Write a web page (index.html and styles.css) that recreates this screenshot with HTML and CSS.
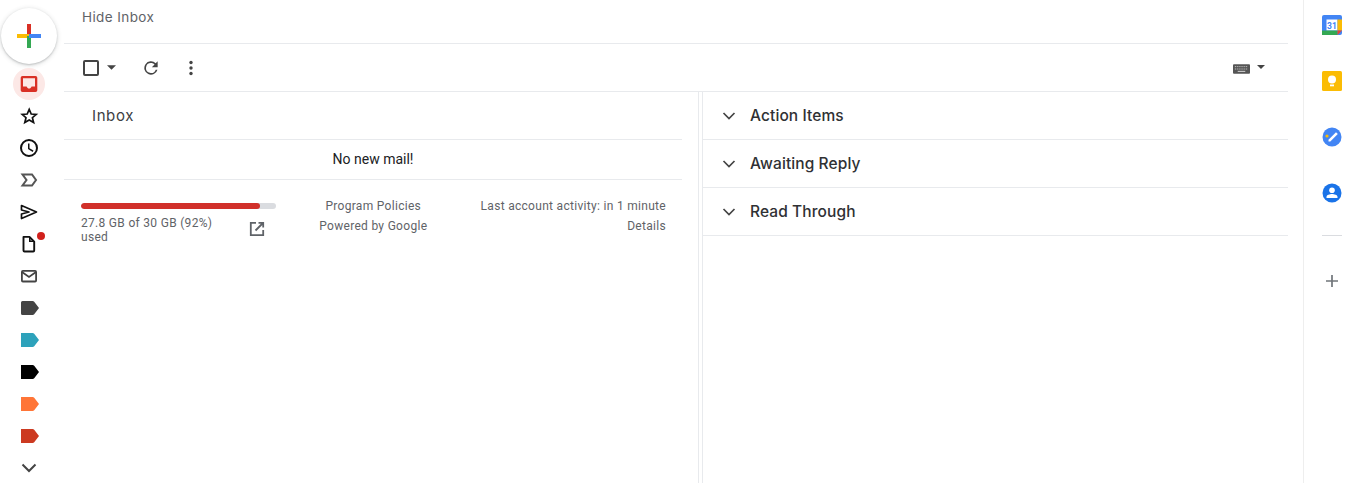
FILE: index.html
```html
<!DOCTYPE html>
<html lang="en">
<head>
<meta charset="utf-8">
<title>Inbox</title>
<link rel="stylesheet" href="styles.css">
</head>
<body>
<div class="app">
  <nav class="rail">
    <button class="compose" aria-label="Compose">
      <svg width="24" height="24" viewBox="0 0 24 24"><rect x="10" y="0" width="4" height="12" fill="#d93025"/><rect x="0" y="10" width="12" height="4" fill="#fbbc04"/><rect x="10" y="12" width="4" height="12" fill="#34a853"/><rect x="12" y="10" width="12" height="4" fill="#4285f4"/></svg>
    </button>
    <ul class="rail-list">
      <li class="rail-item"><span class="active-dot"><svg class="ic" viewBox="0 0 24 24"><path fill="#d93025" fill-rule="evenodd" d="M5.500 4h13A1.800 1.800 0 0 1 20.300 5.800v12.400a1.800 1.800 0 0 1-1.800 1.800h-13a1.800 1.800 0 0 1-1.800-1.800V5.800A1.800 1.800 0 0 1 5.500 4zM6 6.200v8.300h3.600c.5 1.300 1.400 2.100 2.500 2.100s2-.8 2.500-2.100H18V6.200z"/></svg></span></li>
      <li class="rail-item"><svg class="ic" viewBox="0 0 24 24"><path fill="none" stroke="#111" stroke-width="1.700" d="M12.200 5.300l2 4.700 5 .4-3.800 3.300 1.200 4.900-4.400-2.600-4.400 2.600 1.200-4.900L5.200 10.400l5-.4z"/></svg></li>
      <li class="rail-item"><svg class="ic" viewBox="0 0 24 24"><path fill="#111" d="M12 3a9 9 0 1 0 0 18 9 9 0 0 0 0-18zm0 16a7 7 0 1 1 0-14 7 7 0 0 1 0 14zm.5-11.500H11v5.500l4.700 2.900.8-1.300-4-2.400z"/></svg></li>
      <li class="rail-item"><svg class="ic" viewBox="0 0 24 24"><path fill="none" stroke="#555" stroke-width="2" d="M5.500 6.500H15l4 5.500-4 5.500H5.500l4-5.500z"/></svg></li>
      <li class="rail-item"><svg class="ic" viewBox="0 0 24 24"><path fill="none" stroke="#111" stroke-width="1.700" stroke-linejoin="round" d="M4.500 5.500L19.500 12 4.500 18.500V14L12 12 4.500 10z"/></svg></li>
      <li class="rail-item"><span class="draft"><svg class="ic" viewBox="0 0 24 24"><path fill="none" stroke="#111" stroke-width="1.900" stroke-linejoin="round" d="M6.500 4.900h6l4.700 4.700v8.900a1 1 0 0 1-1 1H7.500a1 1 0 0 1-1-1z"/><path fill="#111" d="M12 5h1.500v3.500H17v1.500h-5z"/></svg><i class="badge"></i></span></li>
      <li class="rail-item"><svg class="ic" viewBox="0 0 24 24"><rect x="4.900" y="6.900" width="14.200" height="10.600" rx="1" fill="none" stroke="#444" stroke-width="1.800"/><path fill="none" stroke="#444" stroke-width="1.800" d="M5 8l7 5 7-5"/></svg></li>
      <li class="rail-item"><svg class="ic lbl" viewBox="0 0 24 24"><path fill="#444" d="M16.200 5.800A2 2 0 0 0 14.600 5H4.500A1.500 1.500 0 0 0 3 6.500v11A1.500 1.500 0 0 0 4.500 19h10.100a2 2 0 0 0 1.600-.8L21 12z"/></svg></li>
      <li class="rail-item"><svg class="ic lbl" viewBox="0 0 24 24"><path fill="#2da2bb" d="M16.200 5.800A2 2 0 0 0 14.600 5H3v14h11.600a2 2 0 0 0 1.600-.8L21 12z"/></svg></li>
      <li class="rail-item"><svg class="ic lbl" viewBox="0 0 24 24"><path fill="#000" d="M16.200 5.800A2 2 0 0 0 14.600 5H3v14h11.600a2 2 0 0 0 1.600-.8L21 12z"/></svg></li>
      <li class="rail-item"><svg class="ic lbl" viewBox="0 0 24 24"><path fill="#ff7537" d="M16.200 5.800A2 2 0 0 0 14.600 5H3v14h11.600a2 2 0 0 0 1.600-.8L21 12z"/></svg></li>
      <li class="rail-item"><svg class="ic lbl" viewBox="0 0 24 24"><path fill="#cc3a21" d="M16.200 5.800A2 2 0 0 0 14.600 5H3v14h11.600a2 2 0 0 0 1.600-.8L21 12z"/></svg></li>
      <li class="rail-item"><svg class="ic" viewBox="0 0 24 24"><path fill="none" stroke="#444" stroke-width="2" d="M5.500 8.500l6.500 6.500 6.500-6.500"/></svg></li>
    </ul>
  </nav>

  <main class="main">
    <div class="topbar"><span class="hide-inbox">Hide Inbox</span></div>
    <div class="toolbar">
      <div class="tools">
        <svg class="tool-check" width="20" height="20" viewBox="0 0 20 20"><rect x="3" y="3" width="14" height="14" rx="1" fill="none" stroke="#444" stroke-width="2"/></svg>
        <svg class="tool-caret" width="9" height="5" viewBox="0 0 10 5"><path fill="#444" d="M0 0h10L5 5z"/></svg>
        <svg class="tool-refresh" width="20" height="20" viewBox="0 0 24 24"><path fill="#444" d="M17.650 6.350A8 8 0 1 0 19.730 14h-2.080A6 6 0 1 1 12 6c1.660 0 3.140.69 4.220 1.780L13 11h7V4z"/></svg>
        <svg class="tool-more" width="20" height="20" viewBox="0 0 20 20"><circle cx="10" cy="4.500" r="1.700" fill="#444"/><circle cx="10" cy="10" r="1.700" fill="#444"/><circle cx="10" cy="15.500" r="1.700" fill="#444"/></svg>
      </div>
      <div class="kbd">
        <svg class="kbd-key" width="17" height="10" viewBox="0 0 18 10"><rect width="18" height="10" rx="1" fill="#555"/><path stroke="#ddd" stroke-width="1" stroke-dasharray="1 1" d="M2 2.500h14M2 5h14"/><path stroke="#ddd" d="M5 7.500h8"/></svg>
        <svg class="kbd-caret" width="8" height="4" viewBox="0 0 10 5"><path fill="#444" d="M0 0h10L5 5z"/></svg>
      </div>
    </div>
    <div class="panes">
      <section class="left-pane">
        <div class="inbox-head">Inbox</div>
        <div class="empty">No new mail!</div>
        <footer class="foot">
          <div class="storage">
            <div class="bar"><div class="bar-fill" style="width:92%"></div></div>
            <div class="storage-row">
              <span class="storage-text">27.8 GB of 30 GB (92%) used</span>
              <svg class="ext" width="18" height="18" viewBox="0 0 18 18"><path fill="none" stroke="#5f6368" stroke-width="1.800" d="M8 2.800H2.800v12.400h12.400V10M10.500 2.800h4.700v4.700M15 3l-7.500 7.500"/></svg>
            </div>
          </div>
          <div class="policies"><div>Program Policies</div><div>Powered by Google</div></div>
          <div class="activity"><div>Last account activity: in 1 minute</div><div>Details</div></div>
        </footer>
      </section>
      <div class="divider"></div>
      <section class="right-pane">
        <div class="section-row"><svg class="chev" width="14" height="8" viewBox="0 0 14 8"><path fill="none" stroke="#444" stroke-width="1.700" d="M1.500 1l5.500 5.500L12.500 1"/></svg><span>Action Items</span></div>
        <div class="section-row"><svg class="chev" width="14" height="8" viewBox="0 0 14 8"><path fill="none" stroke="#444" stroke-width="1.700" d="M1.500 1l5.500 5.500L12.500 1"/></svg><span>Awaiting Reply</span></div>
        <div class="section-row"><svg class="chev" width="14" height="8" viewBox="0 0 14 8"><path fill="none" stroke="#444" stroke-width="1.700" d="M1.500 1l5.500 5.500L12.500 1"/></svg><span>Read Through</span></div>
      </section>
    </div>
  </main>

  <aside class="side">
    <svg class="side-ic" width="20" height="20" viewBox="0 0 20 20"><rect width="20" height="20" rx="2" fill="#4285f4"/><rect x="4.500" y="4.500" width="11" height="11" fill="#fff"/><rect x="15.500" y="4.500" width="4.500" height="11" fill="#fbbc04"/><rect y="15.500" width="15.500" height="4.500" fill="#34a853"/><path d="M15.500 15.500H20L15.500 20z" fill="#ea4335"/><text x="10" y="13.500" class="cal-num">31</text></svg>
    <svg class="side-ic" width="20" height="20" viewBox="0 0 20 20"><rect width="20" height="20" rx="1.500" fill="#fbbc04"/><circle cx="10" cy="8.500" r="4" fill="#fff"/><rect x="8" y="13.500" width="4" height="1.800" fill="#fff"/></svg>
    <svg class="side-ic" width="20" height="20" viewBox="0 0 20 20"><circle cx="10" cy="10" r="9.500" fill="#4285f4"/><path d="M6.500 12.800l7.500-7.500 1.800 1.800-7.500 7.500H6.500z" fill="#fff"/><circle cx="5" cy="9" r="1.600" fill="#fbbc04"/></svg>
    <svg class="side-ic" width="20" height="20" viewBox="0 0 20 20"><circle cx="10" cy="10" r="9.500" fill="#1a73e8"/><circle cx="10" cy="7.300" r="2.800" fill="#fff"/><path d="M4.500 14c0-2 3.300-2.900 5.500-2.900s5.500.9 5.500 2.900v1h-11z" fill="#fff"/></svg>
    <div class="side-rule"></div>
    <svg class="side-plus" width="14" height="14" viewBox="0 0 14 14"><path fill="none" stroke="#70757a" stroke-width="1.700" d="M7 1v12M1 7h12"/></svg>
  </aside>
</div>
</body>
</html>
```
FILE: styles.css
```css
* { box-sizing: border-box; }
html, body { margin: 0; height: 100%; overflow: hidden; background: #fff; }
body { font-family: Roboto, "Liberation Sans", sans-serif; color: #202124; }
.app { display: flex; height: 483px; width: 1355px; }

.rail { width: 64px; flex: none; padding: 8px 0 0 1px; }
.compose { display: flex; align-items: center; justify-content: center; width: 56px; height: 56px; padding: 0; border: 0; border-radius: 50%; background: #fff; box-shadow: 0 1px 2px rgba(60,64,67,.25), 0 1px 4px 1px rgba(60,64,67,.12); }
.rail-list { list-style: none; margin: 4px 0 0; padding: 0; }
.rail-item { display: flex; align-items: center; justify-content: center; height: 32px; width: 56px; }
.ic { display: block; width: 24px; height: 24px; }
.lbl { transform: translateX(1px); }
.active-dot { display: flex; align-items: center; justify-content: center; width: 32px; height: 32px; border-radius: 50%; background: #fce8e6; }
.draft { position: relative; display: block; width: 24px; height: 24px; }
.badge { position: absolute; top: 0; right: -4px; width: 8px; height: 8px; border-radius: 50%; background: #d1201c; }

.main { width: 1224px; flex: none; display: flex; flex-direction: column; }
.topbar { height: 44px; padding: 0 0 9px 18px; display: flex; align-items: center; border-bottom: 1px solid #e8eaed; }
.hide-inbox { font-family: Inter, Roboto, sans-serif; font-size: 13.500px; letter-spacing: .4px; color: #5f6368; }
.toolbar { height: 48px; display: flex; align-items: center; justify-content: space-between; padding: 0 23px 0 17px; border-bottom: 1px solid #e8eaed; }
.tools { display: flex; align-items: center; }
.tool-caret { margin: 0 0 0 6px; }
.tool-refresh { margin-left: 25px; }
.tool-more { margin-left: 20px; }
.kbd { display: flex; align-items: center; gap: 7px; }
.kbd-key { margin-top: 3px; }
.kbd-caret { margin-bottom: 1px; }

.panes { flex: 1; display: flex; min-height: 0; }
.left-pane { width: 618px; flex: none; }
.inbox-head { height: 48px; display: flex; align-items: center; padding-left: 28px; font-family: Inter, Roboto, sans-serif; font-size: 15px; letter-spacing: .6px; border-bottom: 1px solid #e8eaed; color: #3c4043; }
.empty { height: 40px; padding-bottom: 2px; display: flex; align-items: center; justify-content: center; font-size: 14px; border-bottom: 1px solid #e8eaed; }
.foot { display: grid; grid-template-columns: 195px 1fr auto; padding: 16px 16px 0 17px; font-size: 12px; line-height: 20px; color: #5f6368; letter-spacing: .3px; }
.bar { width: 195px; height: 6px; margin-top: 7px; background: #dadce0; border-radius: 3px; overflow: hidden; }
.bar-fill { height: 100%; background: #d1302a; border-radius: 3px; }
.storage-row { display: flex; align-items: flex-start; justify-content: space-between; padding: 4px 10px 0 0; }
.storage-text { width: 150px; line-height: 14px; margin-top: 3px; }
.ext { margin-top: 7px; }
.policies { text-align: center; padding-right: 10px; }
.activity { text-align: right; }

.divider { width: 21px; flex: none; border-right: 1px solid #e8eaed; }
.divider::after { content: ""; display: block; width: 1px; height: 100%; margin-left: 16px; background: #e8eaed; }
.right-pane { flex: 1; }
.section-row { height: 48px; display: flex; align-items: center; padding-left: 19px; gap: 14px; font-family: Inter, Roboto, sans-serif; font-size: 15.500px; letter-spacing: .1px; font-weight: 500; border-bottom: 1px solid #e8eaed; color: #2f3134; }
.chev { flex: none; }

.side { flex: 1; margin-left: 15px; border-left: 1px solid #eeeeee; display: flex; flex-direction: column; align-items: center; padding: 15px 0 0 4px; }
.side-ic { display: block; margin-bottom: 36px; }
.cal-num { font: 700 8.500px Roboto, sans-serif; fill: #4285f4; text-anchor: middle; }
.side-rule { width: 20px; height: 1px; background: #dadce0; margin: -4px 0 38px; }
.side-plus { display: block; }
```
